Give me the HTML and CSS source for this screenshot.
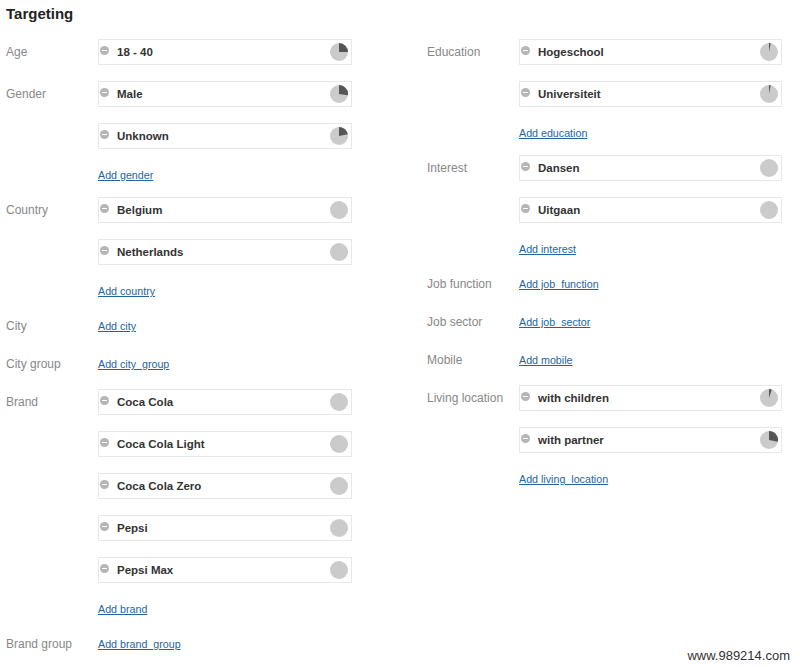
FILE: index.html
```html
<!DOCTYPE html>
<html lang="en">
<head>
    <meta charset="UTF-8">
    <title>Targeting</title>
    <link rel="stylesheet" href="styles.css">
</head>
<body>
    <div class="targeting">
        <h2>Targeting</h2>
        <div class="columns">
            <div class="column left">
                <div class="row">
                    <div class="label">Age</div>
                    <div class="values">
                        <div class="chip"><span class="minus"></span><span class="name">18 - 40</span>
                            <svg class="pie" viewBox="0 0 18 18"><circle cx="9" cy="9" r="9"/><path d="M9 9 L9 0 A9 9 0 0 1 18 9 Z"/></svg></div>
                    </div>
                </div>
                <div class="row">
                    <div class="label">Gender</div>
                    <div class="values">
                        <div class="chip"><span class="minus"></span><span class="name">Male</span>
                            <svg class="pie" viewBox="0 0 18 18"><circle cx="9" cy="9" r="9"/><path d="M9 9 L9 0 A9 9 0 0 1 17.93 10.13 Z"/></svg></div>
                        <div class="chip"><span class="minus"></span><span class="name">Unknown</span>
                            <svg class="pie" viewBox="0 0 18 18"><circle cx="9" cy="9" r="9"/><path d="M9 9 L9 0 A9 9 0 0 1 17.84 7.32 Z"/></svg></div>
                        <a href="#" class="add">Add gender</a>
                    </div>
                </div>
                <div class="row">
                    <div class="label">Country</div>
                    <div class="values">
                        <div class="chip"><span class="minus"></span><span class="name">Belgium</span>
                            <svg class="pie" viewBox="0 0 18 18"><circle cx="9" cy="9" r="9"/></svg></div>
                        <div class="chip"><span class="minus"></span><span class="name">Netherlands</span>
                            <svg class="pie" viewBox="0 0 18 18"><circle cx="9" cy="9" r="9"/></svg></div>
                        <a href="#" class="add">Add country</a>
                    </div>
                </div>
                <div class="row link-row">
                    <div class="label">City</div>
                    <div class="values"><a href="#" class="add only">Add city</a></div>
                </div>
                <div class="row link-row">
                    <div class="label">City group</div>
                    <div class="values"><a href="#" class="add only">Add city_group</a></div>
                </div>
                <div class="row">
                    <div class="label">Brand</div>
                    <div class="values">
                        <div class="chip"><span class="minus"></span><span class="name">Coca Cola</span>
                            <svg class="pie" viewBox="0 0 18 18"><circle cx="9" cy="9" r="9"/></svg></div>
                        <div class="chip"><span class="minus"></span><span class="name">Coca Cola Light</span>
                            <svg class="pie" viewBox="0 0 18 18"><circle cx="9" cy="9" r="9"/></svg></div>
                        <div class="chip"><span class="minus"></span><span class="name">Coca Cola Zero</span>
                            <svg class="pie" viewBox="0 0 18 18"><circle cx="9" cy="9" r="9"/></svg></div>
                        <div class="chip"><span class="minus"></span><span class="name">Pepsi</span>
                            <svg class="pie" viewBox="0 0 18 18"><circle cx="9" cy="9" r="9"/></svg></div>
                        <div class="chip"><span class="minus"></span><span class="name">Pepsi Max</span>
                            <svg class="pie" viewBox="0 0 18 18"><circle cx="9" cy="9" r="9"/></svg></div>
                        <a href="#" class="add">Add brand</a>
                    </div>
                </div>
                <div class="row link-row">
                    <div class="label">Brand group</div>
                    <div class="values"><a href="#" class="add only">Add brand_group</a></div>
                </div>
            </div>

            <div class="column right">
                <div class="row">
                    <div class="label">Education</div>
                    <div class="values">
                        <div class="chip"><span class="minus"></span><span class="name">Hogeschool</span>
                            <svg class="pie" viewBox="0 0 18 18"><circle cx="9" cy="9" r="9"/><path d="M9 9 L9 0 A9 9 0 0 1 10.69 0.16 Z"/></svg></div>
                        <div class="chip"><span class="minus"></span><span class="name">Universiteit</span>
                            <svg class="pie" viewBox="0 0 18 18"><circle cx="9" cy="9" r="9"/><path d="M9 9 L9 0 A9 9 0 0 1 10.69 0.16 Z"/></svg></div>
                        <a href="#" class="add">Add education</a>
                    </div>
                </div>
                <div class="row">
                    <div class="label">Interest</div>
                    <div class="values">
                        <div class="chip"><span class="minus"></span><span class="name">Dansen</span>
                            <svg class="pie" viewBox="0 0 18 18"><circle cx="9" cy="9" r="9"/></svg></div>
                        <div class="chip"><span class="minus"></span><span class="name">Uitgaan</span>
                            <svg class="pie" viewBox="0 0 18 18"><circle cx="9" cy="9" r="9"/></svg></div>
                        <a href="#" class="add">Add interest</a>
                    </div>
                </div>
                <div class="row link-row">
                    <div class="label">Job function</div>
                    <div class="values"><a href="#" class="add only">Add job_function</a></div>
                </div>
                <div class="row link-row">
                    <div class="label">Job sector</div>
                    <div class="values"><a href="#" class="add only">Add job_sector</a></div>
                </div>
                <div class="row link-row">
                    <div class="label">Mobile</div>
                    <div class="values"><a href="#" class="add only">Add mobile</a></div>
                </div>
                <div class="row">
                    <div class="label">Living location</div>
                    <div class="values">
                        <div class="chip"><span class="minus"></span><span class="name">with children</span>
                            <svg class="pie" viewBox="0 0 18 18"><circle cx="9" cy="9" r="9"/><path d="M9 9 L9 0 A9 9 0 0 1 11.78 0.44 Z"/></svg></div>
                        <div class="chip"><span class="minus"></span><span class="name">with partner</span>
                            <svg class="pie" viewBox="0 0 18 18"><circle cx="9" cy="9" r="9"/><path d="M9 9 L9 0 A9 9 0 0 1 17.84 10.69 Z"/></svg></div>
                        <a href="#" class="add">Add living_location</a>
                    </div>
                </div>
            </div>
        </div>
    </div>
    <div class="watermark">www.989214.com</div>
</body>
</html>
```

FILE: styles.css
```css
body {
    margin: 0;
    padding: 0;
    background-color: #fff;
    font-family: "Liberation Sans", Arial, sans-serif;
    color: #333;
}

.targeting {
    padding: 4px 6px 0 6px;
}

h2 {
    margin: 0 0 15px 0;
    font-size: 15px;
    line-height: 20px;
    font-weight: bold;
    color: #222;
}

.columns {
    display: flex;
    gap: 75px;
}

.column.left {
    width: 346px;
}

.column.right {
    width: 355px;
}

.row {
    display: flex;
    margin-bottom: 12px;
}

.link-row + .row:not(.link-row) {
    margin-top: 1px;
}

.label {
    width: 92px;
    flex: none;
    font-size: 12px;
    line-height: 26px;
    color: #888;
}

.values {
    flex: 1;
}

.chip {
    display: flex;
    align-items: center;
    height: 26px;
    box-sizing: border-box;
    border: 1px solid #e8e8e8;
    background-color: #fff;
    margin-bottom: 16px;
    padding: 0 3px 0 1px;
}

.values .chip:last-child {
    margin-bottom: 4px;
}

.minus {
    position: relative;
    width: 9px;
    height: 9px;
    border-radius: 50%;
    background-color: #b5b5b5;
    margin: -3px 8px 0 0;
    flex: none;
}

.minus::after {
    content: "";
    position: absolute;
    left: 2px;
    top: 4px;
    width: 5px;
    height: 1px;
    background-color: #fff;
}

.name {
    flex: 1;
    font-size: 11.5px;
    font-weight: bold;
    color: #333;
}

.pie {
    width: 18px;
    height: 18px;
    flex: none;
}

.pie circle {
    fill: #cbcbcb;
}

.pie path {
    fill: #555;
}

.add {
    display: block;
    font-size: 10.7px;
    line-height: 20px;
    color: #25659f;
    text-decoration: underline;
}

.chip + .add {
    margin-top: 2px;
}

.add.only {
    padding: 3px 0;
}

.watermark {
    position: absolute;
    right: 10px;
    bottom: 4px;
    font-size: 13px;
    color: #333;
}
```
